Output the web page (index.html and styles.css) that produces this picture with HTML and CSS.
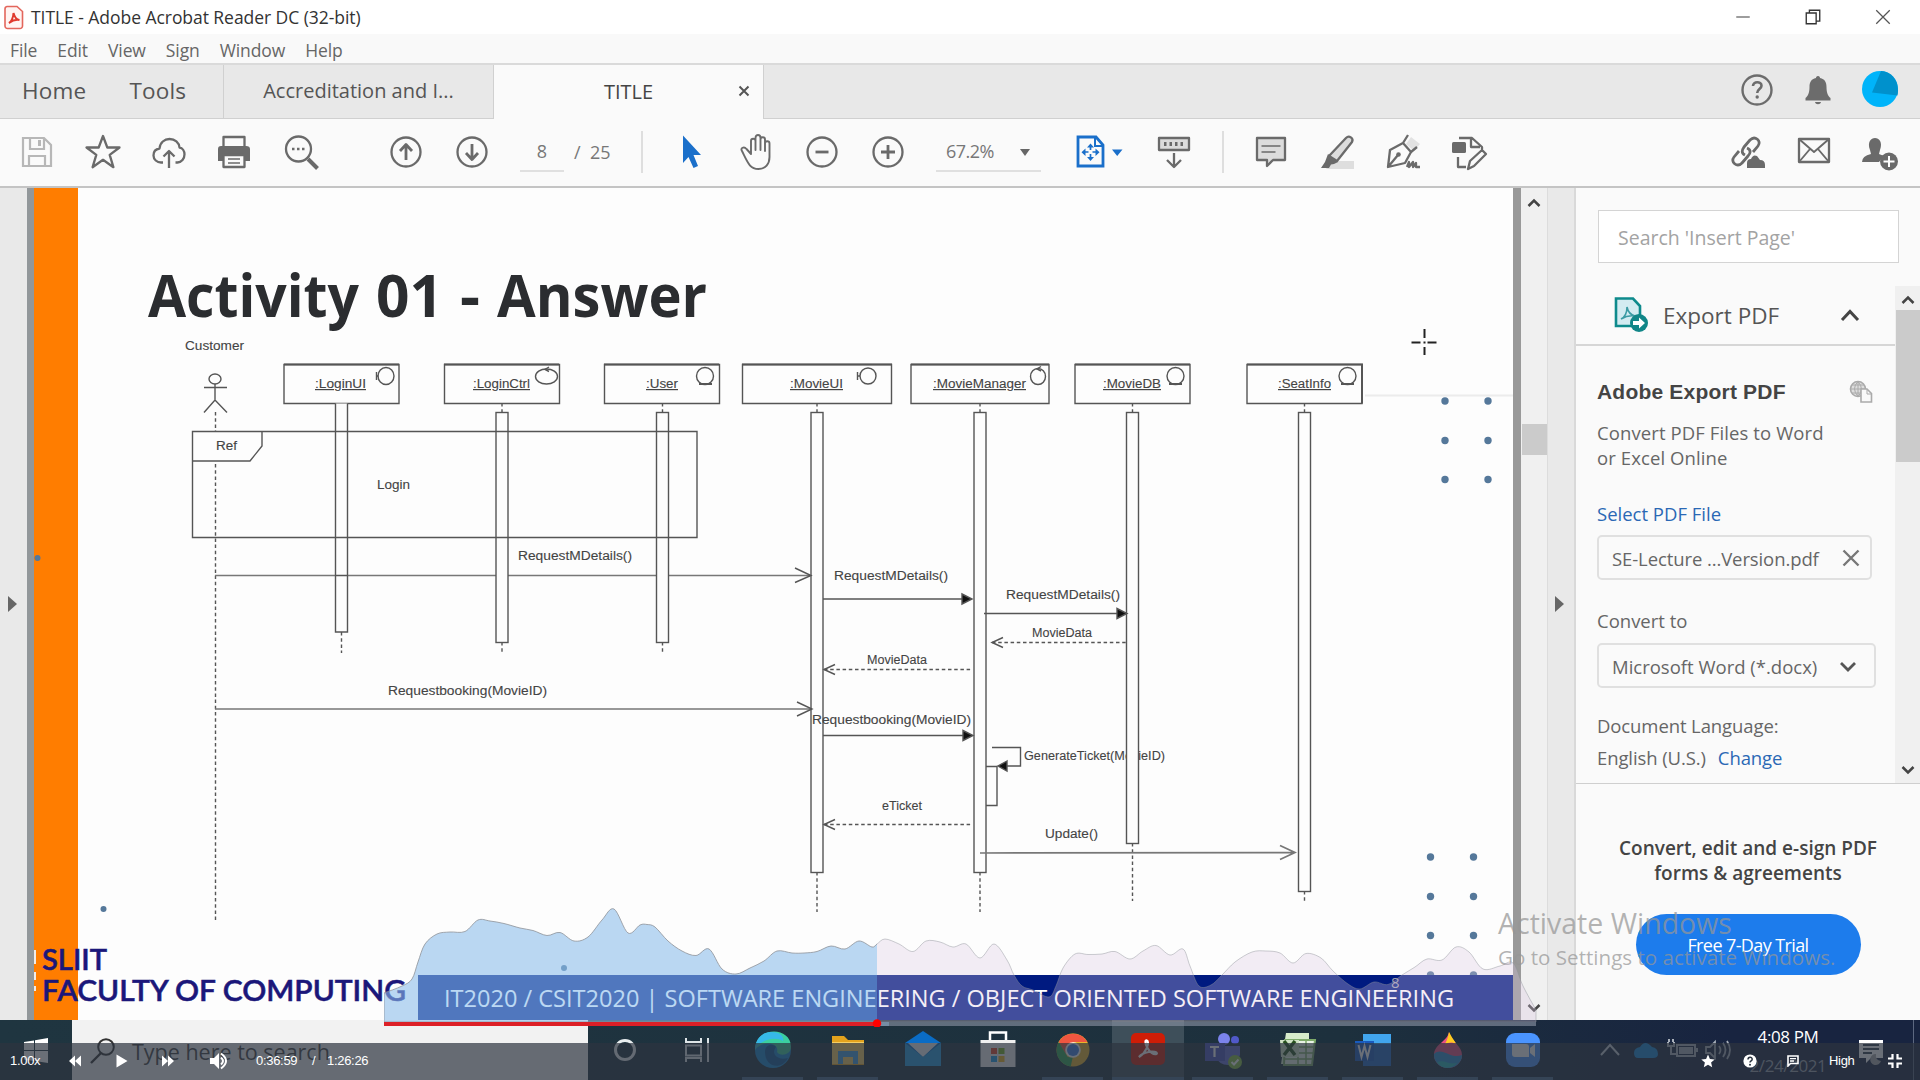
FILE: index.html
```html
<!DOCTYPE html>
<html lang="en">
<head>
<meta charset="utf-8">
<title>TITLE - Adobe Acrobat Reader DC (32-bit)</title>
<link rel="stylesheet" href="styles.css">
</head>
<body>
<div class="screen">
  <header class="titlebar">
    <svg class="app-icon" width="20" height="25" viewBox="0 0 20 25"><path d="M3 1.5h10l5.5 5V21a2.500 2.500 0 0 1-2.500 2.500H3.500A2.500 2.500 0 0 1 1 21V4a2.500 2.500 0 0 1 2-2.500z" fill="#fff4f2" stroke="#e3665c" stroke-width="1.600"/><path d="M5 18c2-1 4.500-5.500 4.500-10 1 4 3 6.500 6 7-4-.8-7 .3-10.500 3z" fill="none" stroke="#e0392d" stroke-width="2"/></svg>
    <span class="title-text">TITLE - Adobe Acrobat Reader DC (32-bit)</span>
    <div class="window-buttons">
      <svg viewBox="0 0 20 20"><path d="M2.500 10h15" stroke="#777" stroke-width="1.600"/></svg>
      <svg viewBox="0 0 20 20"><path d="M2.500 5.500h11v12h-11zM6 5V2.500h11.500v12H14" fill="none" stroke="#333" stroke-width="1.500"/></svg>
      <svg viewBox="0 0 20 20"><path d="M2.500 2.500l15 15m0-15l-15 15" stroke="#555" stroke-width="1.400"/></svg>
    </div>
  </header>
  <nav class="menubar"><span>File</span><span>Edit</span><span>View</span><span>Sign</span><span>Window</span><span>Help</span></nav>
  <div class="tabs">
    <div class="tab-home"><span>Home</span><span class="tools">Tools</span></div>
    <div class="tab">Accreditation and I...</div>
    <div class="tab active"><span>TITLE</span><svg class="tab-close" width="12" height="12" viewBox="0 0 12 12"><path d="M1.500 1.500l9 9m0-9l-9 9" stroke="#555" stroke-width="2"/></svg></div>
    <div class="tab-rest">
      <svg width="36" height="40" viewBox="0 0 36 40"><circle cx="18" cy="20" r="14.500" fill="none" stroke="#6c6c6c" stroke-width="2.400"/><path d="M14 16c0-5 8.500-5 8.500-.3 0 3.300-4.300 3.500-4.300 7.300" fill="none" stroke="#6c6c6c" stroke-width="2.600"/><circle cx="18.200" cy="27" r="1.700" fill="#6c6c6c"/></svg>
      <svg width="36" height="40" viewBox="0 0 36 40"><path d="M18 6c1.500 0 2 1 2 2 5 1 6.500 4.500 6.500 9 0 6 1.500 9 4 11v2.500h-25V28c2.500-2 4-5 4-11 0-4.500 1.500-8 6.500-9 0-1 .5-2 2-2zM15 32h6c-.5 3-5.500 3-6 0z" fill="#6c6c6c"/></svg>
      <svg width="38" height="40" viewBox="0 0 38 40"><circle cx="19" cy="19" r="18" fill="#00b4fa"/><path d="M20 1L11 22.500l25.500 3C39 13 32 1.500 20 1z" fill="#0091cc"/></svg>
    </div>
  </div>
  <div class="toolbar">
    <svg class="cell" viewBox="0 0 66 40"><g fill="none" stroke="#b7b7b7" stroke-width="2.200"><path d="M19 6h21l7 7v21H19zM26 6v11h14V6M25 34V24h16v10"/></g><path d="M34 8h3v6h-3z" fill="#b7b7b7"/></svg>
    <svg class="cell" viewBox="0 0 66 40"><path d="M33 4l4.300 11.500h12.200l-9.800 7.300 3.700 12.400L33 27.800l-10.400 7.400 3.700-12.400-9.800-7.300h12.200z" class="ln"/></svg>
    <svg class="cell" viewBox="0 0 66 40"><path class="ln" d="M27 30.500h-2c-4 0-7.500-3-7.500-7s2.500-6.500 6-7c.5-6 5-9.500 10-9.500 5.500 0 9.500 3.500 10 8.500 3 .5 5 3.500 5 6.800 0 4.500-3 8.200-7 8.200h-2M33 36V19m-5.500 5.500L33 19l5.500 5.500"/></svg>
    <svg class="cell narrow" viewBox="0 0 66 40"><path class="ln" d="M22.500 14V5h21v9"/><path d="M17 17q0-3 3-3h25q4 0 4 3v12h-5v-5H22v5h-5z" fill="#6a6a6a"/><path class="ln page" d="M22.500 23h21v12h-21z"/><path d="M27 27h12m-12 4h12" stroke="#6a6a6a" stroke-width="1.600"/></svg>
    <svg class="cell" viewBox="0 0 66 40"><circle class="ln" cx="30.500" cy="17" r="12.500"/><path d="M40 27l9.500 9.500" stroke="#6a6a6a" stroke-width="4"/><path d="M24 17h2.500m2.500 0h2.500m2.500 0h2.500" stroke="#6a6a6a" stroke-width="2.500"/></svg>
    <div class="nav-gap"></div>
    <svg class="cell" viewBox="0 0 66 40"><circle class="ln" cx="33" cy="20" r="14.500"/><path class="ln bold" d="M33 28V13m-6 6l6-6.500 6 6.500"/></svg>
    <svg class="cell" viewBox="0 0 66 40"><circle class="ln" cx="33" cy="20" r="14.500"/><path class="ln bold" d="M33 12v15m-6-6l6 6.500 6-6.500"/></svg>
    <div class="page-no">8</div><div class="page-total">/&nbsp; 25</div>
    <i class="sep"></i>
    <svg class="cell" viewBox="0 0 66 40"><path d="M26 3.500l18 19.500h-7.500l4.500 11-4.500 2-5-11-5.500 6z" fill="#1a6fca"/></svg>
    <svg class="cell" viewBox="0 0 66 40"><path class="ln thin" d="M19 19c-2-3 2-5 4.500-2l4.500 5V9c0-3 4.500-3 4.500 0v9V6c0-4 5-4 5 0v12V7.500c0-3 4.500-3 4.500 0V19v-7.500c0-3 4.500-3 4.500 0V25c0 7-4 12-11 12-9 0-11-7-16.500-18z"/></svg>
    <svg class="cell" viewBox="0 0 66 40"><circle class="ln" cx="33" cy="20" r="14.500"/><path class="ln bold" d="M26.500 20h13"/></svg>
    <svg class="cell" viewBox="0 0 66 40"><circle class="ln" cx="33" cy="20" r="14.500"/><path class="ln bold" d="M26 20h14m-7-7v14"/></svg>
    <div class="zoom-box">67.2%<i class="caret"></i></div>
    <svg class="cell fit" viewBox="0 0 66 40"><path d="M13 5h18l7 8v21H13z" fill="none" stroke="#1a6fca" stroke-width="2.800"/><path d="M30 5v9h8" fill="none" stroke="#1a6fca" stroke-width="2"/><path d="M25.500 13v14m-7-7h14" stroke="#1a6fca" stroke-width="1.700" stroke-dasharray="5 4"/><path d="M22 15.500l3.500-4 3.500 4zM22 25l3.500 4 3.500-4zM20.500 16.500l-4 3.700 4 3.700zM30.500 16.500l4 3.700-4 3.700zM47 17.500h10.500L52.200 24z" fill="#1a6fca"/></svg>
    <svg class="cell" viewBox="0 0 66 40"><path class="ln filled" d="M18 6h30v12H18z"/><path d="M23 12h20" stroke="#6a6a6a" stroke-width="4" stroke-dasharray="2.500 3"/><path class="ln" d="M33 21v14m-7-7l7 7 7-7"/></svg>
    <i class="sep"></i>
    <svg class="cell" viewBox="0 0 66 40"><path class="ln filled" d="M19 6h28v22H35l-6 6v-6H19z"/><path d="M23.500 14h19m-19 6h14" stroke="#6a6a6a" stroke-width="1.700"/></svg>
    <svg class="cell" viewBox="0 0 66 40"><path d="M27 29h23v8H22z" fill="#dedede"/><path class="ln filled" d="M25 24L42 6c3-3 8 0 6 4L33 29z"/><path d="M24 22l10 8-4 2-3 .5-2 3.500h-8l4-6z" fill="#6a6a6a"/></svg>
    <svg class="cell" viewBox="0 0 66 40"><path d="M36 12l5-7 9 7-6 7z" fill="#e2e2e2"/><path class="ln" d="M18 35l2-17 13-7 8 9-6 11zM18 35l10-12M33 11l5-8m3 17l6-5M37 35l2-5v5l4-5v5l3-4v4h4"/><circle cx="28.500" cy="22.500" r="2.300" fill="#6a6a6a"/></svg>
    <svg class="cell" viewBox="0 0 66 40"><path class="ln" d="M23 6h13l10 9v3M35 6v9h9M22 25v10h8M34 29L46 18l4 4-12 12-6 3z"/><rect x="16" y="10" width="14" height="11" rx="1.500" fill="#6a6a6a"/></svg>
    <div class="tool-right">
      <svg class="cell" viewBox="0 0 66 40"><path class="ln bold" d="M31 23c-4-2-3-5-1-8l6-7c5-5 12 1 8 6l-5 6M33 16c5 2 3 6 1 8l-6 7c-5 5-12-1-8-6l5-6"/><path d="M33 36v-5q0-4 4-4 2-5 6-3l3 4q5 0 5 5v3z" fill="#6a6a6a"/></svg>
      <svg class="cell" viewBox="0 0 66 40"><path class="ln" d="M19 7h30v23H19z"/><path class="ln thin" d="M19 7l15 13L49 7M19 30l11-13m19 13L38 17"/></svg>
      <svg class="cell" viewBox="0 0 66 40"><path d="M16 30q0-6 9-8l-1-4c-6-16 16-16 10 0l-1 4 5 2-5 6z" fill="#6a6a6a"/><circle cx="43" cy="29.500" r="9" fill="#6a6a6a"/><path d="M37.500 29.500h11M43 24v11" stroke="#fff" stroke-width="2"/></svg>
    </div>
  </div>

  <main class="workspace">
    <div class="gutter left"><i class="expand"></i></div>
    <svg class="slide" width="1494" height="832" viewBox="27 188 1494 832">
      <rect x="27" y="188" width="1494" height="832" fill="#fdfdfd"/>
      <rect x="27" y="188" width="7" height="832" fill="#92979a"/><rect x="1513" y="188" width="8" height="832" fill="#999"/>
      <rect x="34" y="188" width="44" height="832" fill="#ff7d00"/>
      <path d="M1365 395.500h148" stroke="#ececec" stroke-width="2"/>
      <g class="heading"><text x="148" y="317" textLength="211" lengthAdjust="spacingAndGlyphs">Activity</text><text x="376" y="317" textLength="67" lengthAdjust="spacingAndGlyphs">01</text><text x="460" y="317" textLength="20" lengthAdjust="spacingAndGlyphs">-</text><text x="497" y="317" textLength="210" lengthAdjust="spacingAndGlyphs">Answer</text></g>
      <g class="dots"><circle cx="1445" cy="401" r="3.700"/><circle cx="1488" cy="401" r="3.700"/><circle cx="1445" cy="440.500" r="3.700"/><circle cx="1488" cy="440.500" r="3.700"/><circle cx="1445" cy="479.500" r="3.700"/><circle cx="1488" cy="479.500" r="3.700"/><circle cx="1430.500" cy="857" r="3.700"/><circle cx="1473.500" cy="857" r="3.700"/><circle cx="1430.500" cy="896.500" r="3.700"/><circle cx="1473.500" cy="896.500" r="3.700"/><circle cx="1430.500" cy="935.500" r="3.700"/><circle cx="1473.500" cy="935.500" r="3.700"/><circle cx="1430.500" cy="975" r="3.700"/><circle cx="1473.500" cy="975" r="3.700"/><circle cx="37.500" cy="558" r="3"/><circle cx="103.500" cy="909" r="3"/><circle cx="564" cy="968" r="3"/></g>
      <g class="dia">
        <ellipse cx="215" cy="379" rx="6" ry="5"/><path d="M215 384v16M204 387.500h23M204 412.500l11-12.500 12 12.500"/>
        <path class="dash" d="M215.500 412v19M215.500 464V920M341.500 632v21M502 403v9M502 642v11M662.500 403v9M662.500 642v11M817 403v9M817 872v40M980 403v9M980 872v40M1132.500 403v9M1132.500 843v58M1304.500 403v9M1304.500 891v10"/>
        <path d="M284 364.500h115v39H284zM444.500 364.500h115v39h-115zM604.500 364.500h115v39h-115zM742.500 364.500h149v39h-149zM911 364.500h138v39H911zM1075 364.500h115v39h-115zM1247 364.500h115v39h-115z"/>
        <path d="M742 364.500h150M911 364.500h138M1075 364.500h115M1247 364.500h115v39M284 364.500h115M444 364.500h115M604 364.500h115" stroke-width="2"/>
        <path class="msg" d="M215 575.500h595M215 709h597"/>
        <g class="life"><path d="M335.500 403.500v228.500h12V403.500"/><rect x="496" y="412.500" width="12" height="230"/><rect x="656.500" y="412.500" width="12" height="230"/><rect x="811" y="412.500" width="12" height="460"/><rect x="974" y="412.500" width="12" height="460"/></g>
        <path d="M192.500 431.500h504.500v106H192.500zM262 431.500V446l-12 15h-57.500M335 575.500h13"/>
        <path d="M795 568l16 7.500-16 7M797 702l15 7-15 7"/>
      </g>
      <g class="lbl">
        <text x="185" y="350" textLength="59" lengthAdjust="spacingAndGlyphs">Customer</text><text x="216" y="450" textLength="21" lengthAdjust="spacingAndGlyphs">Ref</text><text x="377" y="489" textLength="33" lengthAdjust="spacingAndGlyphs">Login</text>
        <g class="u"><text x="315" y="388" textLength="51" lengthAdjust="spacingAndGlyphs">:LoginUI</text><text x="473" y="388" textLength="57" lengthAdjust="spacingAndGlyphs">:LoginCtrl</text><text x="646" y="388" textLength="32" lengthAdjust="spacingAndGlyphs">:User</text><text x="790" y="388" textLength="53" lengthAdjust="spacingAndGlyphs">:MovieUI</text><text x="933" y="388" textLength="93" lengthAdjust="spacingAndGlyphs">:MovieManager</text><text x="1103" y="388" textLength="58" lengthAdjust="spacingAndGlyphs">:MovieDB</text><text x="1278" y="388" textLength="53" lengthAdjust="spacingAndGlyphs">:SeatInfo</text></g>
        <text x="518" y="560" textLength="114" lengthAdjust="spacingAndGlyphs">RequestMDetails()</text><text x="834" y="579.500" textLength="114" lengthAdjust="spacingAndGlyphs">RequestMDetails()</text><text x="1006" y="598.500" textLength="114" lengthAdjust="spacingAndGlyphs">RequestMDetails()</text>
        <text x="1032" y="637" textLength="60" lengthAdjust="spacingAndGlyphs">MovieData</text><text x="867" y="664" textLength="60" lengthAdjust="spacingAndGlyphs">MovieData</text>
        <text x="388" y="695" textLength="159" lengthAdjust="spacingAndGlyphs">Requestbooking(MovieID)</text><text x="812" y="723.500" textLength="159" lengthAdjust="spacingAndGlyphs">Requestbooking(MovieID)</text>
        <text x="1024" y="759.500" textLength="141" lengthAdjust="spacingAndGlyphs">GenerateTicket(MovieID)</text><text x="882" y="810" textLength="40" lengthAdjust="spacingAndGlyphs">eTicket</text><text x="1045" y="838" textLength="53" lengthAdjust="spacingAndGlyphs">Update()</text>
      </g>
      <g class="dia">
        <g class="life"><rect x="1126.500" y="412.500" width="12" height="431"/><rect x="1298.500" y="412.500" width="12" height="479"/></g>
        <path d="M823 599h142M984 613.500h134M823 735.500h142M992 747.500h28.500V766H1005M986 766.500h11V805.500h-11"/>
        <path class="msg" d="M980 853l314-.5M1280 845.500l15 7-15 7"/>
        <path d="M962 594l10 5-10 5zM1117 608.500l10 5-10 5zM963 730.500l10 5-10 5zM1007 761l-9 5 9 5z" fill="#111"/>
        <path class="dash" d="M992 642.500h134M824 669.500h148M824 824.500h148"/>
        <path d="M1003 637.500l-11 5 11 5M835 664.500l-11 5 11 5M835 819.500l-11 5 11 5"/>
        <ellipse cx="386" cy="376" rx="8" ry="8.500"/><path d="M376.500 372v8m0-4h2"/><ellipse cx="546.500" cy="376.500" rx="11" ry="7.500"/><path d="M549 367l-4 2.500 4 2"/><circle cx="705" cy="376" r="8.500"/><path d="M699 384h13" stroke-width="2"/>
        <ellipse cx="868" cy="376" rx="8" ry="8"/><path d="M857.500 372v8m0-4h2.500"/><ellipse cx="1038" cy="376.500" rx="7.500" ry="8"/><path d="M1041 366.500l-4 2.500 4 2"/><circle cx="1175.500" cy="376" r="8.500"/><circle cx="1347.500" cy="376" r="8.500"/><path d="M1169 384h13M1341 384h13" stroke-width="2"/>
      </g>
      <path d="M1411.500 342.500h9m7 0h9M1424.500 329v9m0 9v8M1423.500 342.500h2" stroke="#222" stroke-width="2"/>
      <path d="M34 950h2v14h-2zM34 972h2v8h-2zM34 986h2v5h-2z" fill="#f1ece9"/>
      <g class="faculty"><text x="42" y="970" textLength="65" lengthAdjust="spacingAndGlyphs">SLIIT</text><text x="42" y="1001" textLength="364" lengthAdjust="spacingAndGlyphs">FACULTY OF COMPUTING</text></g>
      <rect x="418" y="975" width="1095" height="45" fill="#001a80"/>
      <text class="course" x="444" y="1007" textLength="1010" lengthAdjust="spacingAndGlyphs">IT2020 / CSIT2020 | SOFTWARE ENGINEERING / OBJECT ORIENTED SOFTWARE ENGINEERING</text>
      <text class="slide-no" x="1391" y="988">8</text>
    </svg>
    <div class="scrollbar doc"><svg width="14" height="10" viewBox="0 0 14 10"><path d="M1.500 8L7 2.500 12.500 8" class="chev"/></svg><i class="thumb"></i><svg class="down" width="14" height="10" viewBox="0 0 14 10"><path d="M1.500 2L7 7.500 12.500 2" class="chev"/></svg></div>
    <div class="gutter right"><i class="expand"></i></div>
    <aside class="panel">
      <div class="search">Search 'Insert Page'</div>
      <div class="panel-scroll">
        <div class="panel-body">
          <div class="export-head">
            <svg width="36" height="38" viewBox="0 0 36 38"><path d="M3 2.500h17l7 7.500v20H3z" fill="#d3ebf1" stroke="#0e8a8c" stroke-width="2.600"/><path d="M8 23c4-2 6-7 6-12 1 5 4 8 8 9-5-1-9 0-14 3z" fill="none" stroke="#3c9ba4" stroke-width="1.600"/><circle cx="26" cy="27" r="9" fill="#118688"/><path d="M20 25h6v-3.500l6 5.500-6 5.500V29h-6z" fill="#fff"/></svg>
            <span>Export PDF</span>
            <svg class="up" width="20" height="14" viewBox="0 0 20 14"><path d="M2 12l8-8.500 8 8.500" fill="none" stroke="#444" stroke-width="3"/></svg>
          </div>
          <div class="export-body">
            <div class="brand"><b>Adobe Export PDF</b><svg width="24" height="24" viewBox="0 0 24 24"><circle cx="9" cy="9" r="7.500" fill="#ddd" stroke="#aaa" stroke-width="1.600"/><path d="M1.500 9h15M9 1.500v15M3 5h12M3 13h12M9 1.500q-7 7 0 15 7-7 0-15" fill="none" stroke="#aaa"/><path d="M12 9h6l4.500 4.500V22H12z" fill="#f9f9f9" stroke="#aaa" stroke-width="1.600"/><path d="M18 9v5h4" fill="none" stroke="#aaa"/></svg></div>
            <p class="desc">Convert PDF Files to Word<br>or Excel Online</p>
            <a class="link select">Select PDF File</a>
            <div class="field file"><span>SE-Lecture ...Version.pdf</span><svg width="18" height="18" viewBox="0 0 18 18"><path d="M1.500 1.500l15 15m0-15l-15 15" stroke="#777" stroke-width="2.400"/></svg></div>
            <span class="conv-label">Convert to</span>
            <div class="field format"><span>Microsoft Word (*.docx)</span><svg width="18" height="12" viewBox="0 0 18 12"><path d="M2 2l7 7 7-7" fill="none" stroke="#555" stroke-width="2.800"/></svg></div>
            <span class="lang">Document Language:</span>
            <div class="lang-row"><span>English (U.S.)</span><a class="link change">Change</a></div>
          </div>
        </div>
        <div class="scrollbar side"><svg width="14" height="10" viewBox="0 0 14 10"><path d="M1.500 8L7 2.500 12.500 8" class="chev"/></svg><i class="thumb"></i><svg class="down" width="14" height="10" viewBox="0 0 14 10"><path d="M1.500 2L7 7.500 12.500 2" class="chev"/></svg></div>
      </div>
      <div class="promo"><p>Convert, edit and e-sign PDF<br>forms &amp; agreements</p><div class="trial">Free 7-Day Trial</div></div>
    </aside>
  </main>

  <footer class="taskbar">
    <div class="start"><svg width="24" height="26" viewBox="0 0 24 26"><path d="M0 4l10-1.500V12H0zM11 2.300L24 0v12H11zM0 13h10v10L0 21.500zM11 13h13v12l-13-2z" fill="#fff"/></svg></div>
    <div class="task-search"><svg width="26" height="28" viewBox="0 0 26 28"><circle cx="16" cy="10" r="7.800" fill="none" stroke="#333" stroke-width="2"/><path d="M11 16L1 26" stroke="#333" stroke-width="2.400"/></svg><span>Type here to search</span></div>
    <div class="apps">
      <div class="app"><svg viewBox="0 0 40 40"><circle cx="20" cy="20" r="9.500" fill="none" stroke="#e9eef0" stroke-width="3"/></svg></div>
      <div class="app plain2"><svg viewBox="0 0 40 40"><path d="M8 8v4h15V8M8 15.500h15v10H8zM8 32v-4h15v4M30 8v24" fill="none" stroke="#dde4e7" stroke-width="2"/></svg></div>
      <div class="app run"><svg viewBox="0 0 40 40"><circle cx="20" cy="20" r="18" fill="#1786cf"/><path d="M2 20C2-4 38-4 38 17c0 8-11 10-14 5 3-10-15-12-22-2z" fill="#3bcfa0"/><path d="M2 20C2 8 10 2 18 2c9 0 13 4 12 9-8-5-22-2-28 9z" fill="#36b9e8"/><path d="M12 22c0-8 8-9 11-5-5 6 0 14 12 11-7 13-23 9-23-6z" fill="#115b9b"/></svg></div>
      <div class="app run"><svg viewBox="0 0 40 40"><path d="M4 6h12l4 4h16v25H4z" fill="#e3a31d"/><path d="M4 12h32v22H4z" fill="#f5ce63"/><path d="M10 21h20v13h-5v-7H15v7h-5z" fill="#429ee0"/></svg></div>
      <div class="app"><svg viewBox="0 0 40 40"><path d="M2 13L20 1l18 12v23H2z" fill="#0a6cc5"/><path d="M5 13h30L20 27z" fill="#f0f4f7"/><path d="M2 13l18 14L38 13v23H2z" fill="#259ce0"/></svg></div>
      <div class="app"><svg viewBox="0 0 40 40"><path d="M12 12V2.500h16V12" fill="none" stroke="#fff" stroke-width="2.500"/><path d="M2.500 10h35v27h-35z" fill="#f0f0f0"/><path d="M13 18h6v6h-6z" fill="#e4492c"/><path d="M20.500 18h6v6h-6z" fill="#79b325"/><path d="M13 26h6v6h-6z" fill="#1c9ce3"/><path d="M20.500 26h6v6h-6z" fill="#f0b51c"/></svg></div>
      <div class="app run"><svg viewBox="0 0 40 40"><circle cx="20" cy="20" r="16.500" fill="#e8b42a"/><path d="M5.700 12A16.500 16.500 0 0 1 34.300 12H20L13 24z" fill="#ef5640"/><path d="M5.700 12l9 15 5 .5-2 9A16.500 16.500 0 0 1 5.700 12z" fill="#2fa453"/><circle cx="20" cy="20" r="7.800" fill="#fff"/><circle cx="20" cy="20" r="6" fill="#3e80e8"/></svg></div>
      <div class="app run current"><svg viewBox="0 0 40 40"><rect x="3" y="3" width="34" height="32" rx="5" fill="#cf1d07"/><path d="M11 27c7-4 10-13 8.500-16-2.500-2-3 2 0 7 2 4 6 7 9 6 2-2-4-3-8-2-4 .8-8 3-9.500 5z" fill="none" stroke="#fff" stroke-width="2.200"/></svg></div>
      <div class="app run"><svg viewBox="0 0 40 40"><circle cx="21" cy="9" r="6" fill="#7b83eb"/><circle cx="32" cy="10" r="4" fill="#5059c9"/><path d="M14 16h23v9q-3 10-12 10T14 28z" fill="#6570d5"/><path d="M2 13h20v18H2z" fill="#4b53bc"/><path d="M7 17h9m-4.500 0v10" stroke="#fff" stroke-width="2.200"/><circle cx="32" cy="32" r="7" fill="#86bd45"/><path d="M28.500 32l2.500 2.500 4.500-5" fill="none" stroke="#fff" stroke-width="2"/></svg></div>
      <div class="app run"><svg viewBox="0 0 40 40"><path d="M8 3h23v31H3z" fill="#d7eccb"/><path d="M7 10h30l-3 25H6z" fill="#e8f2e5" stroke="#7eaa6a" stroke-width="2"/><path d="M7 17h29M7 23h28M7 29h27M20 10v24M28 10v24" stroke="#7eaa6a" stroke-width="1.500"/><path d="M2 10h19v17H3z" fill="#cfe3c5"/><path d="M6 11l11 14m0-14L6 25" stroke="#28521f" stroke-width="3.500"/></svg></div>
      <div class="app run"><svg viewBox="0 0 40 40"><path d="M10 4h28v12H10z" fill="#41a5ee"/><path d="M10 14h28v22H10z" fill="#1f67c4"/><path d="M2 11h19v20H2z" fill="#185abd"/><path d="M5.500 15l3 12 3-11 3 11 3-12" fill="none" stroke="#fff" stroke-width="2"/></svg></div>
      <div class="app run"><svg viewBox="0 0 40 40"><path d="M21 2c3 10 13 14 13 23a14 13 0 0 1-28 0C6 14 19 12 21 2z" fill="#e85082"/><path d="M21 2c3 6 6 9 7 12-3-2-7-2-11 0 2-4 3-7 4-12z" fill="#ffcb20"/><path d="M6 24c8-8 17 6 28 1a14 13 0 0 1-28 0z" fill="#2b8fd0"/><path d="M9 32c8-3 11 3 20 1-5 6-15 7-20-1z" fill="#26b8bb"/></svg></div>
      <div class="app run"><svg viewBox="0 0 40 40"><rect x="3" y="3" width="34" height="34" rx="9" fill="#4a94ff"/><path d="M9 14h14q3 0 3 3v10H12q-3 0-3-3zM27 18l5-4v13l-5-4z" fill="#fff"/></svg></div>
    </div>
    <div class="tray">
      <svg width="36" height="24" viewBox="0 0 36 24"><path d="M9 17l9-10 9 10" fill="none" stroke="#c3cbd4" stroke-width="2"/></svg>
      <svg width="36" height="24" viewBox="0 0 36 24"><path d="M6 15q0-5 6-6 5-8 12 0 6 1 6 7 0 4-5 4H10q-4 0-4-5z" fill="#1686d5"/></svg>
      <svg width="36" height="24" viewBox="0 0 36 24"><path d="M13 7h18v11H13zM31 11h2v3M4 4v4h6V4M7 8v8h6M5 1v3m4-3v3" fill="none" stroke="#a9b0ba" stroke-width="2"/><path d="M15 9h14v7H15z" fill="#a9b0ba"/></svg>
      <svg width="36" height="24" viewBox="0 0 36 24"><path d="M6 9h4l5-5v16l-5-5H6zM19 8q3 4 0 8M23 5q5 7 0 14M27 3q6 9 0 18" fill="none" stroke="#a9b0ba" stroke-width="1.800"/></svg>
      <div class="clock"><span class="time">4:08 PM</span><span class="date">2/24/2021</span></div>
      <svg class="note" width="28" height="30" viewBox="0 0 28 30"><path d="M2 3h24v18H14l-5 5v-5H2z" fill="#fff"/><path d="M6 8h16M6 12h16M6 16h9" stroke="#344150" stroke-width="1.800"/><path d="M19 17q-1 6 5 7a5.500 5.500 0 1 1-5-7z" fill="#aaa"/></svg>
      <i class="show-desktop"></i>
    </div>
  </footer>

  <div class="watermark"><div class="w1">Activate Windows</div><div class="w2">Go to Settings to activate Windows.</div></div>

  <div class="player">
    <svg class="wave" width="1160" height="122" viewBox="384 905 1160 122">
      <defs><clipPath id="played"><rect x="384" y="900" width="493" height="122"/></clipPath><clipPath id="rest"><rect x="877" y="900" width="660" height="122"/></clipPath></defs>
      <path class="area played" clip-path="url(#played)"/><path class="area rest" clip-path="url(#rest)"/>
      <rect x="877" y="1022" width="659" height="4" fill="#8b93a4" fill-opacity=".62"/><rect x="877" y="1022" width="12" height="4" fill="#758da4"/>
      <rect x="384" y="1022" width="493" height="4" fill="#dc2027"/><ellipse cx="877" cy="1023.500" rx="4.200" ry="4.200" fill="red"/>
    </svg>
    <div class="controls">
      <span class="speed">1.00x</span>
      <svg class="rw" width="14" height="12" viewBox="0 0 14 12"><path d="M7 .5v11L1 6zM13 .5v11L7 6z"/></svg>
      <svg class="play" width="12" height="14" viewBox="0 0 12 14"><path d="M.5.500v13L11.500 7z"/></svg>
      <svg class="ff" width="14" height="12" viewBox="0 0 14 12"><path d="M1 .5v11L7 6zM7 .5v11L13 6z"/></svg>
      <svg class="vol" width="20" height="18" viewBox="0 0 20 18"><path d="M1 6h4l5-5v16l-5-5H1z"/><path d="M12 5.500q4 3.500 0 7M12 1.500q10 7.500 0 15" fill="none" stroke="#fff" stroke-width="2"/></svg>
      <span class="cur">0:36:59</span><span class="slash">/</span><span class="total">1:26:26</span>
      <div class="right">
        <svg class="star" width="14" height="14" viewBox="0 0 14 14"><path d="M7 .5l1.900 4.500 4.800.4-3.600 3.100 1.100 4.800L7 10.800l-4.200 2.500 1.100-4.800L.3 5.400l4.800-.4z"/></svg>
        <svg class="help" width="14" height="14" viewBox="0 0 14 14"><circle cx="7" cy="7" r="6.600"/><path d="M5 5.500c0-3 4.200-3 4.200-.2C9.200 7 7 6.700 7 8.600" fill="none" stroke="#29323e" stroke-width="1.500"/><circle cx="7" cy="10.800" r="1" fill="#29323e"/></svg>
        <svg class="chat" width="12" height="12" viewBox="0 0 12 12"><path d="M1 1h10v7.500H3.500L1 11z" fill="none" stroke="#fff" stroke-width="1.600"/><path d="M3 3.700h6M3 6h4" stroke="#fff" stroke-width="1.300"/></svg>
        <span class="quality">High</span>
        <svg class="shrink" width="14" height="14" viewBox="0 0 14 14"><path d="M0 4.500h4.500V0M9.500 0v4.500H14M0 9.500h4.500V14M9.500 14V9.500H14" fill="none" stroke="#fff" stroke-width="2.200"/></svg>
      </div>
    </div>
  </div>
</div>
<script src="wave.js"></script>
</body>
</html>
```
FILE: styles.css
```css
* { box-sizing: border-box; }
body { margin: 0; }
svg { display: block; flex: none; }
p { margin: 0; }
.screen { position: relative; width: 1920px; height: 1080px; display: flex; flex-direction: column; overflow: hidden; background: #fff; color: #666; font-family: "Open Sans", "Noto Sans", sans-serif; white-space: nowrap; }
.titlebar { height: 34px; display: flex; align-items: center; padding-left: 4px; background: #fff; color: #333; }
.title-text { margin-left: 7px; font-size: 17.5px; letter-spacing: -0.05px; }
.window-buttons { margin-left: auto; display: flex; gap: 52px; padding-right: 28px; }
.window-buttons svg { width: 18px; height: 18px; }
.menubar { height: 29px; display: flex; align-items: center; gap: 20px; padding: 2px 0 0 10px; background: #f9f9f9; font-size: 17.5px; letter-spacing: -0.1px; }
.tabs { height: 56px; display: flex; border-top: 2px solid #dadada; background: #e8e8e8; font-size: 20px; color: #555; }
.tab-home { width: 224px; display: flex; align-items: center; padding: 0 0 3px 22px; border-right: 1px solid #d0d0d0; border-bottom: 1px solid #d0d0d0; font-size: 22.5px; letter-spacing: 0.2px; }
.tab-home .tools { margin-left: 43px; }
.tab { width: 270px; display: flex; align-items: center; justify-content: center; padding-bottom: 2px; border-right: 1px solid #d0d0d0; border-bottom: 1px solid #d0d0d0; }
.tab.active { background: #fafafa; border-bottom: 0; justify-content: flex-start; padding-left: 110px; color: #444; }
.tab-close { margin-left: 85px; }
.tab-rest { flex: 1; display: flex; align-items: center; justify-content: flex-end; gap: 25px; padding: 0 21px 3px 0; border-bottom: 1px solid #d0d0d0; }
.toolbar { height: 69px; display: flex; align-items: center; padding: 0 0 2px 4px; background: #fafafa; border-bottom: 2px solid #c4c4c4; font-size: 18px; color: #777; }
.cell { width: 66px; height: 40px; }
.cell.narrow { margin: 0 1px 0 -1px; }
.ln { fill: none; stroke: #6a6a6a; stroke-width: 2.3; stroke-linejoin: round; }
.ln.bold { stroke-width: 2.8; }
.ln.thin { stroke-width: 1.9; }
.ln.filled { fill: #dcdcdc; }
.ln.page { fill: #fafafa; }
.nav-gap { width: 39px; }
.page-no { width: 44px; height: 41px; margin: 0 10px 0 15px; padding-top: 8px; text-align: center; border-bottom: 2px solid #e0e0e0; }
.page-total { width: 67px; }
.sep { width: 2px; height: 42px; background: #dedede; }
.sep + .cell { margin-left: 14px; }
.zoom-box { width: 105px; height: 41px; margin: 0 24px 0 15px; padding: 8px 11px 0 10px; display: flex; justify-content: space-between; border-bottom: 2px solid #e0e0e0; letter-spacing: -0.5px; }
.caret { margin-top: 10px; height: 0; border: 5px solid transparent; border-top: 7px solid #666; }
.cell.fit { margin-right: 10px; }
.cell + .sep { margin-left: 15px; }
.tool-right { margin-left: auto; display: flex; padding-right: 8px; }
.workspace { height: 832px; display: flex; }
.gutter { background: #e9e9e9; display: flex; align-items: center; }
.gutter.left { width: 27px; padding-left: 8px; }
.gutter.right { width: 27px; padding-left: 7px; border-left: 1px solid #dcdcdc; }
.expand { border: 8px solid transparent; border-left: 9px solid #666; border-right: 0; margin-bottom: 1px; }
.heading { font: bold 59px "Open Sans", sans-serif; fill: #2b2d30; }
.dots { fill: #55789a; }
.dia { fill: none; stroke: #555; stroke-width: 1.4; }
.dash { stroke-dasharray: 3.5 2.7; }
.life { fill: #fdfdfd; }
.msg { stroke: #777; stroke-width: 1.7; }
.lbl { font: 12px "Liberation Sans", sans-serif; fill: #444; }
.lbl text { stroke: #444; stroke-width: .1px; }
.u { text-decoration: underline; }
.faculty { font: 600 28px Lato, sans-serif; fill: #1b177a; stroke: #1b177a; stroke-width: .5px; }
.course { font: 24px "Open Sans", sans-serif; fill: #fff; }
.slide-no { font: 15px "Open Sans", sans-serif; fill: #a0a0b0; }
.scrollbar { display: flex; flex-direction: column; align-items: center; background: #f0f0f0; }
.scrollbar.doc { width: 26px; padding: 10px 0 7px; }
.scrollbar.doc .thumb { margin-top: 216px; width: 25px; height: 31px; background: #cbcbcb; }
.scrollbar .down { margin-top: auto; }
.chev { fill: none; stroke: #444; stroke-width: 2.5; }
.panel { width: 346px; display: flex; flex-direction: column; background: #fafafa; border-left: 2px solid #d9d9d9; font-size: 18.5px; }
.search { width: 301px; height: 53px; margin: 22px 0 0 22px; padding: 13px 0 0 19px; border: 1px solid #d4d4d4; background: #fff; font-size: 19.5px; color: #a3a3a3; }
.panel-scroll { margin-top: 23px; height: 498px; display: flex; border-bottom: 1px solid #cfcfcf; }
.panel-body { width: 319px; }
.scrollbar.side { width: 25px; padding: 9px 0 8px; }
.scrollbar.side .thumb { margin-top: 5px; width: 24px; height: 152px; background: #cbcbcb; }
.export-head { height: 60px; display: flex; align-items: center; padding: 0 35px 0 37px; border-bottom: 2px solid #d6d6d6; font-size: 22.5px; color: #555; }
.export-head span { margin-left: 14px; }
.export-head .up { margin-left: auto; }
.export-body { display: flex; flex-direction: column; padding-left: 21px; }
.brand { margin-top: 33px; height: 26px; display: flex; justify-content: space-between; align-items: center; padding-right: 22px; font-family: "Liberation Sans", sans-serif; font-size: 21px; letter-spacing: 0.2px; color: #444; }
.desc { margin-top: 15px; line-height: 25px; letter-spacing: 0.1px; }
.link { color: #2a68b5; }
.select { margin-top: 31px; line-height: 25px; }
.field { display: flex; align-items: center; justify-content: space-between; height: 45px; padding: 1px 10px 0 13px; border: 2px solid #e0e0e0; border-radius: 5px; }
.file { width: 275px; margin-top: 9px; letter-spacing: -0.1px; }
.conv-label { margin-top: 28px; line-height: 25px; }
.format { width: 279px; margin-top: 10px; padding-right: 17px; padding-top: 2px; }
.lang { margin-top: 25px; line-height: 25px; letter-spacing: -0.1px; }
.lang-row { margin-top: 7px; line-height: 25px; display: flex; gap: 12px; letter-spacing: -0.1px; }
.promo { display: flex; flex-direction: column; align-items: center; padding-top: 52px; color: #444; font-size: 19px; font-weight: 600; line-height: 25px; text-align: center; }
.trial { width: 225px; height: 61px; margin-top: 28px; border-radius: 31px; background: #1d7cec; color: #fff; font-size: 18px; letter-spacing: -0.6px; font-weight: 400; line-height: 63px; }
.taskbar { height: 60px; display: flex; background: linear-gradient(90deg, #1f3540, #1d303d 70%, #182440 90%); }
.start { width: 72px; padding: 18px 0 0 24px; }
.task-search { width: 516px; display: flex; align-items: flex-start; padding: 17px 0 0 18px; background: #f2f2f2; color: #444; font-size: 21.5px; }
.task-search span { margin-left: 16px; line-height: 46px; margin-top: -8px; }
.apps { display: flex; }
.app { width: 75px; height: 60px; display: flex; justify-content: center; padding-top: 10px; }
.app:first-child { width: 73px; }
.app svg { width: 40px; height: 40px; }
.app.plain2 { width: 74px; }
.run { background: linear-gradient(#4b6a8c, #4b6a8c) center bottom / 61px 3px no-repeat; }
.run.current { background: linear-gradient(#4b6a8c, #4b6a8c) center bottom / 72px 3px no-repeat, linear-gradient(#3e4f5a, #3e4f5a) center / 72px 60px no-repeat; }
.tray { flex: 1; display: flex; padding: 18px 0 0 32px; }
.clock { width: 92px; margin: -16px 0 0 6px; display: flex; flex-direction: column; align-items: center; font-size: 17px; letter-spacing: -0.4px; line-height: 29px; color: #fff; }
.date { color: #9aa1ad; }
.note { margin: -1px 0 0 23px; }
.show-desktop { width: 1px; height: 60px; margin: -18px 6px 0 auto; background: #5c6880; }
.watermark { position: absolute; left: 1498px; top: 904px; color: rgba(150,150,150,.72); }
.w1 { font-size: 28.5px; line-height: 38px; }
.w2 { font-size: 20.6px; line-height: 30px; }
.player { position: absolute; left: 0; bottom: 0; width: 1920px; height: 175px; }
.wave { position: absolute; left: 384px; top: 0; z-index: 1; }
.area { stroke: #8e9299; stroke-width: 1; }
.played { fill: rgba(137,187,234,.58); stroke-opacity: .8; }
.rest { fill: rgba(219,200,225,.3); stroke-opacity: .45; }
.controls { position: absolute; left: 0; bottom: 0; width: 1920px; height: 37px; display: flex; align-items: center; padding: 0 0 2px 10px; background: rgba(45,52,64,.71); font: 13px "Liberation Sans", sans-serif; letter-spacing: -0.3px; color: #fff; fill: #fff; }
.speed { width: 31px; }
.rw { margin-left: 27px; }
.play { margin-left: 34px; }
.ff { margin-left: 33px; }
.vol { margin-left: 34px; }
.cur { margin-left: 27px; width: 42px; }
.slash { margin-left: 14px; width: 4px; }
.total { margin-left: 11px; }
.right { margin-left: auto; padding-right: 18px; display: flex; align-items: center; }
.help { margin-left: 28px; }
.chat { margin-left: 30px; }
.quality { margin-left: 30px; width: 27px; }
.shrink { margin-left: 32px; }
```
FILE: wave.js
```js
// Engagement curve over the timeline: x,y pairs in screen units.
const pts = [[384,993],[402,986],[412,979],[418,962],[425,944],[437,934],[450,932],[465,931.5],[478,920],[490,921],[504,923.5],[520,928],[533,930.5],[547,935.5],[560,932.5],[574,941],[588,937],[602,920],[614,909],[628,933],[640,925],[647,924.5],[655,927],[668,941],[682,951],[696,955.5],[709,949],[722,969],[736,974],[750,968],[764,961],[777,951],[792,953],[804,953],[817,951.5],[831,946],[845,949],[859,941],[872,947],[877,944],[885,939],[899,944],[913,951.5],[926,941],[940,942],[953,947],[966,944],[980,958],[994,944],[1007,960],[1014,975],[1022,986],[1033,990],[1049,997],[1056,986],[1063,968],[1075,954],[1088,954.5],[1102,954],[1115,951.5],[1130,959],[1143,951],[1156,945.5],[1170,955],[1183,949],[1190,966],[1199,986],[1211,985],[1222,975],[1235,962],[1252,952],[1266,951],[1280,953],[1293,963],[1306,953.5],[1321,958],[1333,971],[1348,984],[1360,989],[1374,982],[1388,984.5],[1402,975],[1415,967],[1427,959],[1442,960],[1456,947],[1469,952],[1483,969],[1500,966],[1513,963],[1523,986],[1536,1010]];
let d = `M384 1022L${pts[0]}`;
for (let i = 0; i < pts.length - 1; i++) {
  const a = pts[i - 1] || pts[i], b = pts[i], c = pts[i + 1], e = pts[i + 2] || c;
  d += `C${b[0] + (c[0] - a[0]) / 6} ${b[1] + (c[1] - a[1]) / 6} ${c[0] - (e[0] - b[0]) / 6} ${c[1] - (e[1] - b[1]) / 6} ${c[0]} ${c[1]}`;
}
d += "V1022z";
document.querySelectorAll(".area").forEach(p => p.setAttribute("d", d));
```
